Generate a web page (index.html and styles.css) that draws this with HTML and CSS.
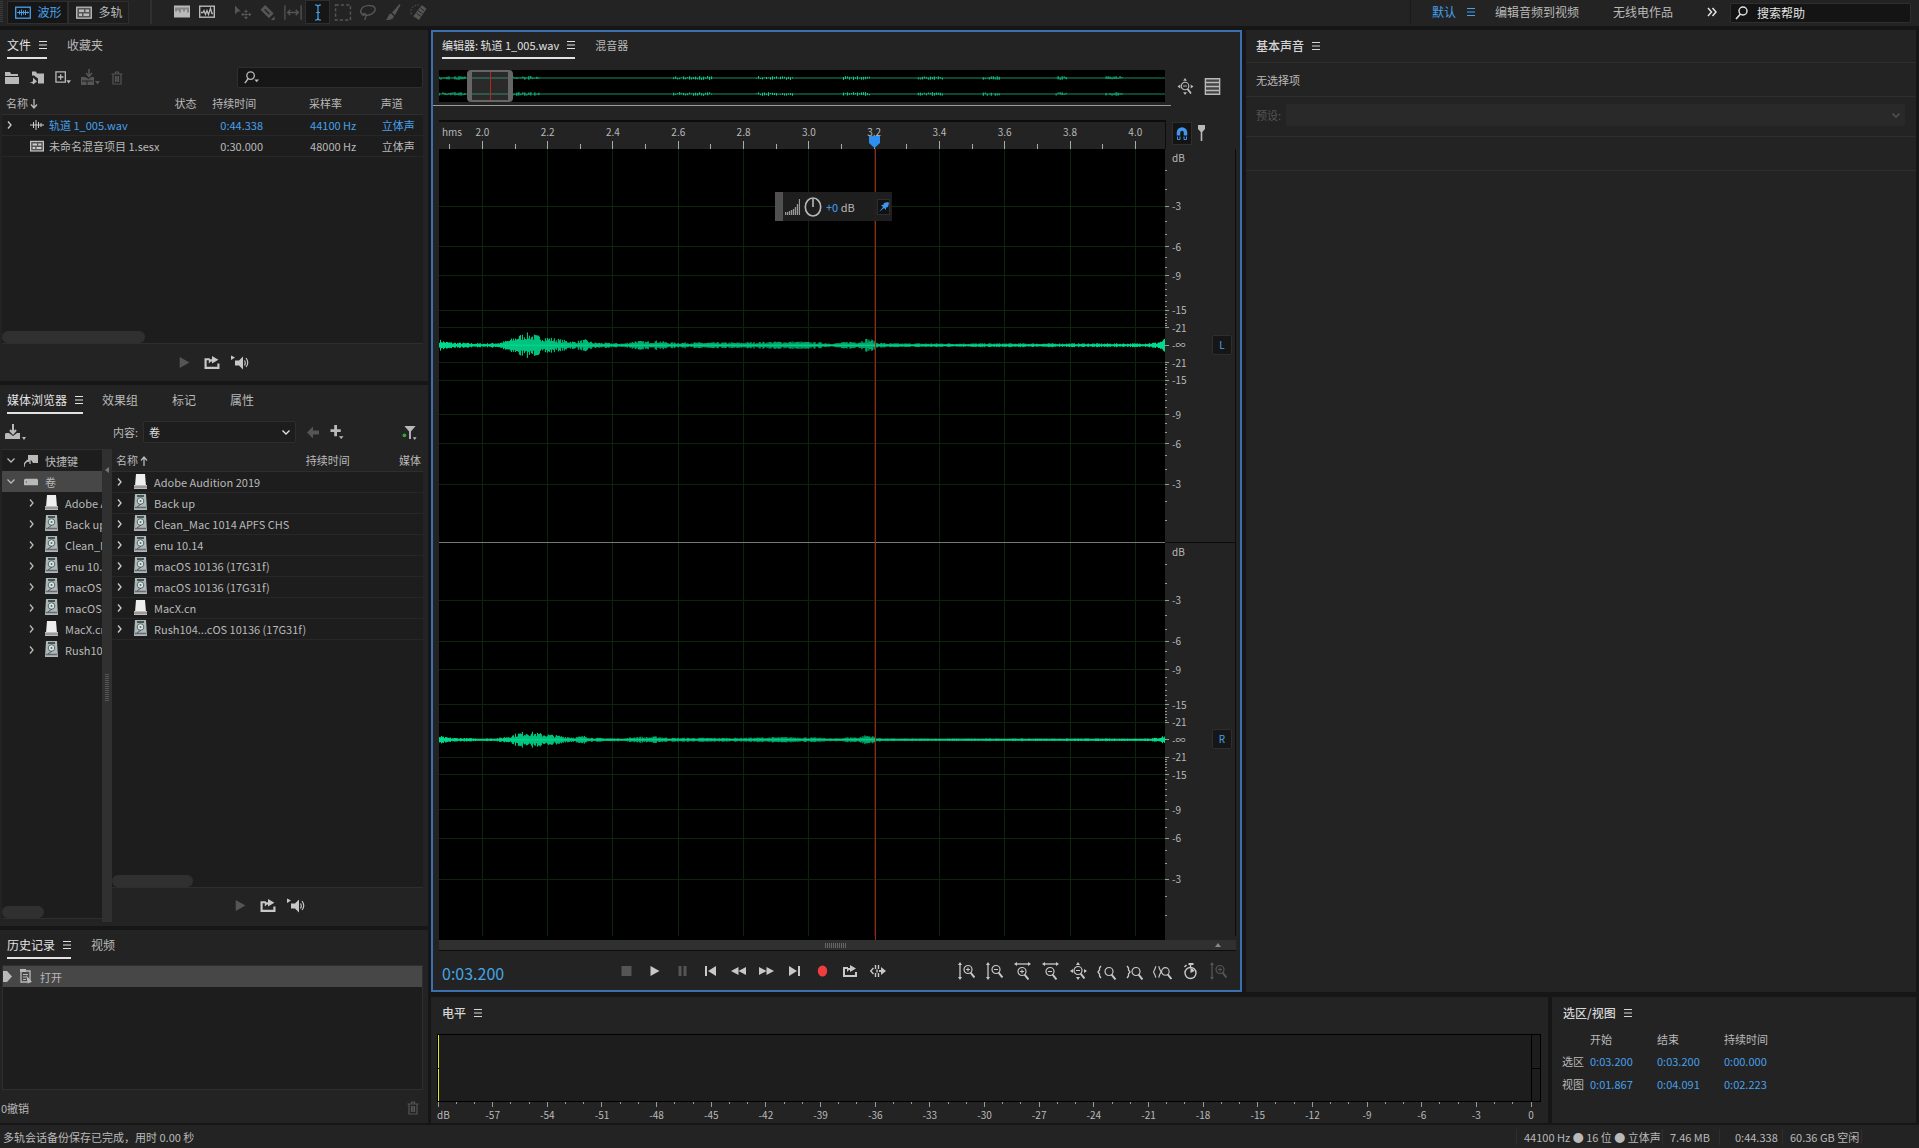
FILE: index.html
```html
<!DOCTYPE html>
<html>
<head>
    <meta charset="utf-8">
    <title>Audition</title>
    <meta name="viewport" content="width=device-width, initial-scale=1.0">
    <link rel="stylesheet" href="styles.css">
</head>
<body>
    <!-- Icon set -->
    <svg class="sprite">
        <symbol id="i-wavebox" viewBox="0 0 16 14"><rect x=".7" y="1.7" width="14.6" height="11" fill="none" stroke="currentColor" stroke-width="1.3"/><path d="M2 7h12M4.5 5v4M6.5 4v6M8.5 5v4M10.5 4.5v5M12.5 6v2" stroke="currentColor" fill="none"/></symbol>
        <symbol id="i-multi" viewBox="0 0 16 14"><rect x=".7" y="1.7" width="14.6" height="11" fill="#555" stroke="currentColor" stroke-width="1.3"/><path d="M3 4h5v2.500H3zM9.500 4H13v2.500H9.500zM3 8h3v2.500H3zM7.500 8H13v2.500H7.500z" fill="currentColor"/></symbol>
        <symbol id="i-spectral" viewBox="0 0 16 14"><path d="M0 1h16v12H0z" fill="currentColor"/><path d="M2 3v4M4 3v3M6 3v5M8 3v2M10 3v4M12 3v2M14 3v5" stroke="#555"/></symbol>
        <symbol id="i-graph" viewBox="0 0 16 14"><rect x=".7" y="1.700" width="14.600" height="11" fill="none" stroke="currentColor" stroke-width="1.400"/><path d="M2 8h2l1-2 1.500 4L8 6l1.500 4 2-6L13 9h1" fill="none" stroke="currentColor" stroke-width="1.300"/></symbol>
        <symbol id="i-move" viewBox="0 0 18 16"><path d="M1 1l6 6H4l-3 3zM12 5l2 2.500h-4zM12 15l2-2.500h-4zM7 10l2.500-2v4zM17.500 10L15 8v4z" fill="currentColor"/><path d="M12 7v6M9 10h6" stroke="currentColor"/></symbol>
        <symbol id="i-razor" viewBox="0 0 16 18"><path d="M5 1l9 9-5 5-9-9zM15 13v4h-4z" fill="currentColor"/><path d="M4.500 5.500l5 5" stroke="#232323" stroke-width="1.500"/></symbol>
        <symbol id="i-slip" viewBox="0 0 20 16"><path d="M1 0v16M19 0v16M4 8h12M7 5L4 8l3 3M13 5l3 3-3 3" stroke="currentColor" stroke-width="1.400" fill="none"/></symbol>
        <symbol id="i-ibeam" viewBox="0 0 10 18"><path d="M2 1q3 0 3 2v12q0 2-3 2M8 1Q5 1 5 3v12q0 2 3 2M3 9h4" stroke="currentColor" stroke-width="1.300" fill="none"/></symbol>
        <symbol id="i-marquee" viewBox="0 0 16 16"><rect x="1" y="1" width="14" height="14" fill="none" stroke="currentColor" stroke-width="1.400" stroke-dasharray="3 2"/></symbol>
        <symbol id="i-lasso" viewBox="0 0 16 16"><path d="M4 11C-1 8 1 2 8 1.500s9 4 4 7.500c-3 2-7 2-8 1s1-2 2 0-1 3-1 5" stroke="currentColor" stroke-width="1.300" fill="none"/></symbol>
        <symbol id="i-brush" viewBox="0 0 16 18"><path d="M15 0l1 1-6 11-3-3zM6 10l3 3c-1 4-5 4-9 4 3-1 2-6 6-7z" fill="currentColor"/></symbol>
        <symbol id="i-heal" viewBox="0 0 18 18"><path d="M13 1l5 4-8 12-6-4z" fill="currentColor"/><path d="M9 7l5 3.500M7.500 10l4.500 3M11.500 4l4 3.500" stroke="#232323" stroke-width="1"/><path d="M2 11C0 5 4 1 10 1" stroke="currentColor" stroke-dasharray="2 1.500" fill="none"/></symbol>
        <symbol id="i-menu" viewBox="0 0 8 10"><path d="M0 1.500h8M0 5h8M0 8.500h8" stroke="currentColor" stroke-width="1.200"/></symbol>
        <symbol id="i-search" viewBox="0 0 14 14"><circle cx="8" cy="5" r="4" fill="none" stroke="currentColor" stroke-width="1.400"/><path d="M5.500 8L1 13" stroke="currentColor" stroke-width="1.600"/></symbol>
        <symbol id="i-filter" viewBox="0 0 17 14"><circle cx="7" cy="5" r="4" fill="none" stroke="currentColor" stroke-width="1.400"/><path d="M4.500 8L1 13" stroke="currentColor" stroke-width="1.600"/><path d="M11 9h5l-2.500 3z" fill="currentColor"/></symbol>
        <symbol id="i-more" viewBox="0 0 10 10"><path d="M1 1l3.500 4L1 9M5.500 1L9 5 5.500 9" stroke="currentColor" stroke-width="1.500" fill="none"/></symbol>
        <symbol id="i-folder" viewBox="0 0 14 14"><path d="M0 1h5l1 2h7v2H0z" fill="currentColor"/><path d="M0 6h14v7H0z" fill="currentColor"/></symbol>
        <symbol id="i-import" viewBox="0 0 16 14"><path d="M3 1h4l1 2h7v10H9V8L5 5H3z" fill="currentColor"/><path d="M0 12q4 0 4-2V7l4 4-4 3v-1z" fill="currentColor"/></symbol>
        <symbol id="i-new" viewBox="0 0 17 14"><path d="M1 1h10v11H1z" fill="none" stroke="currentColor" stroke-width="1.400"/><path d="M6 3.500v6M3 6.500h6" stroke="currentColor" stroke-width="1.400"/><path d="M12 10h5l-2.500 3.500z" fill="currentColor"/></symbol>
        <symbol id="i-insert" viewBox="0 0 19 17"><path d="M8 0v6M5 4l3 3.500L11 4" stroke="currentColor" stroke-width="1.500" fill="none"/><path d="M0 8h4l4 2 2-2h3v8H0z" fill="currentColor"/><path d="M1 12h11M6 12v4" stroke="#232323"/><path d="M14 12h5l-2.500 3.500z" fill="currentColor"/></symbol>
        <symbol id="i-trash" viewBox="0 0 11 14"><path d="M0 3h11M4 2.500V1h3v1.500M1.500 3v10h8V3M4 5v6M5.500 5v6M7 5v6" stroke="currentColor" stroke-width="1.200" fill="none"/></symbol>
        <symbol id="i-chev" viewBox="0 0 5 8"><path d="M1 .5L4 4 1 7.500" stroke="currentColor" stroke-width="1.300" fill="none"/></symbol>
        <symbol id="i-down" viewBox="0 0 8 5"><path d="M.5 .5L4 4 7.500 .5" stroke="currentColor" stroke-width="1.300" fill="none"/></symbol>
        <symbol id="i-sortdown" viewBox="0 0 8 10"><path d="M4 0v9M1 5.500L4 9l3-3.500" stroke="currentColor" stroke-width="1.300" fill="none"/></symbol>
        <symbol id="i-sortup" viewBox="0 0 8 10"><path d="M4 10V1M1 4.500L4 1l3 3.500" stroke="currentColor" stroke-width="1.300" fill="none"/></symbol>
        <symbol id="i-wav" viewBox="0 0 14 12"><path d="M0 6h14M3.500 3v6M6 1v10M8.500 3v6M11 4v4" stroke="currentColor" stroke-width="1"/></symbol>
        <symbol id="i-play" viewBox="0 0 10 12"><path d="M1 1l9 5-9 5z" fill="currentColor"/></symbol>
        <symbol id="i-loop" viewBox="0 0 14 14"><path d="M5 4H1v8h12V8" fill="none" stroke="currentColor" stroke-width="2"/><path d="M4 8V4h3V1l6 3.500L7 8V6H6z" fill="currentColor"/></symbol>
        <symbol id="i-speaker" viewBox="0 0 20 14"><path d="M1 0l4 2-4 2.500zM5 5h4l4-4v13l-4-4H5z" fill="currentColor"/><path d="M14.500 5q1.500 2.500 0 5M16 2.500q3.500 4.500 0 9" stroke="currentColor" stroke-width="1.200" fill="none"/></symbol>
        <symbol id="i-drive-in" viewBox="0 0 21 17"><path d="M8 0v8M5 6l3 3.500L11 6" stroke="currentColor" stroke-width="2" fill="none"/><path d="M1 9h3l4 3 4-3h3v6H0v-5zM17 13h4l-2 3z" fill="currentColor"/></symbol>
        <symbol id="i-back" viewBox="0 0 12 12"><path d="M0 6l6-6v4h6v4H6v4z" fill="currentColor"/></symbol>
        <symbol id="i-plus" viewBox="0 0 14 15"><path d="M5.500 0v12M0 6h11" stroke="currentColor" stroke-width="3"/><path d="M9 12h5l-2.500 3z" fill="currentColor"/></symbol>
        <symbol id="i-funnel" viewBox="0 0 16 16"><path d="M2 1h12l-5 6v8H7V7zM11 13h4l-2 3z" fill="currentColor"/><circle cx="2" cy="11" r="2" fill="#2fa834"/></symbol>
        <symbol id="i-shortcut" viewBox="0 0 14 14"><path d="M4 1h10v8H9L7 6H4z" fill="currentColor"/><path d="M0 13q0-6 5-6M2.500 6.500H6V10" stroke="currentColor" stroke-width="1.300" fill="none"/></symbol>
        <symbol id="i-volume" viewBox="0 0 15 9"><path d="M1 1h13l1 1v6H0V2z" fill="currentColor"/><path d="M2 4.500h1" stroke="#333"/></symbol>
        <symbol id="i-ext" viewBox="0 0 13 17"><path d="M2 1h9l1 12H1z" fill="#eee"/><path d="M0 12h13v4H0z" fill="#bdbdbd"/><path d="M0 14h13" stroke="#777"/></symbol>
        <symbol id="i-disk" viewBox="0 0 13 17"><path d="M1 0h11l1 16H0z" fill="#adb8b8"/><path d="M3 2h7" stroke="#455" stroke-width="2"/><circle cx="6.500" cy="7" r="3.300" fill="#dce6e4" stroke="#566"/><circle cx="6.500" cy="7" r="1" fill="#566"/><path d="M3 13l4-3" stroke="#455"/><path d="M1 13.500h11" stroke="#667" stroke-width="1.500"/></symbol>
        <symbol id="i-history" viewBox="0 0 12 15"><path d="M1 2h9v11H1z" fill="none" stroke="currentColor" stroke-width="1.300"/><path d="M0 0h6v3H0zM6 6l6 7H9l-1 2z" fill="currentColor"/><path d="M3 5.500h5M3 8h3M3 10.500h3" stroke="currentColor"/></symbol>
        <symbol id="i-state" viewBox="0 0 9 11"><path d="M0 0h4l5 5.500L4 11H0z" fill="currentColor"/></symbol>
        <symbol id="i-list" viewBox="0 0 14 15"><path d="M.7 .7h12.600v13.600H.7zM1 4h12M1 7.500h12M1 11h12" stroke="currentColor" stroke-width="1.200" fill="#444"/></symbol>
        <symbol id="i-magnet" viewBox="0 0 12 14"><path d="M2.500 9V6a3.500 3.500 0 0 1 7 0v3" stroke="currentColor" stroke-width="3.500" fill="none"/><path d="M1.500 10v3h2.500v-3M8 10v3h2.500v-3" stroke="currentColor" fill="none"/></symbol>
        <symbol id="i-marker" viewBox="0 0 7 16"><path d="M0 0h7v4L4.300 7v9H2.700V7L0 4z" fill="currentColor"/></symbol>
        <symbol id="i-stop" viewBox="0 0 10 12"><path d="M0 1h10v10H0z" fill="currentColor"/></symbol>
        <symbol id="i-pause" viewBox="0 0 10 12"><path d="M1 1h3v10H1zM6 1h3v10H6z" fill="currentColor"/></symbol>
        <symbol id="i-prev" viewBox="0 0 11 12"><path d="M0 1h2v10H0zM11 1v10L3 6z" fill="currentColor"/></symbol>
        <symbol id="i-next" viewBox="0 0 11 12"><path d="M9 1h2v10H9zM0 1v10l8-5z" fill="currentColor"/></symbol>
        <symbol id="i-rew" viewBox="0 0 15 12"><path d="M7.500 2v8L0 6zM15 2v8L7.500 6z" fill="currentColor"/></symbol>
        <symbol id="i-ff" viewBox="0 0 15 12"><path d="M0 2v8l7.500-4zM7.500 2v8L15 6z" fill="currentColor"/></symbol>
        <symbol id="i-rec" viewBox="0 0 10 12"><ellipse cx="5" cy="6" rx="4.700" ry="5.500" fill="#f03e3e"/></symbol>
        <symbol id="i-skip" viewBox="0 0 16 14"><path d="M3.500 4L.700 7l2.800 3M5.500 1v4M5.500 9v4M8.500 1v4M8.500 9v4M7 5.500v3" stroke="currentColor" stroke-width="1.400" fill="none"/><path d="M9 6h2V3l5 4-5 4V8H9z" fill="currentColor"/></symbol>
        <!-- magnifiers -->
        <symbol id="i-lens" viewBox="0 0 12 14"><circle cx="5" cy="5.500" r="4" fill="none" stroke="currentColor" stroke-width="1.200"/><path d="M7.500 8.500l4 5" stroke="currentColor" stroke-width="2"/></symbol>
        <symbol id="i-vin" viewBox="0 0 17 18"><path d="M2 2v14" stroke="currentColor" stroke-width="1.300"/><path d="M2 0l2 3H0zM2 18l2-3H0z" fill="currentColor"/><use href="#i-lens" x="5" y="2" width="12" height="14"/><path d="M8 7.500h4M10 5.500v4" stroke="currentColor"/></symbol>
        <symbol id="i-vout" viewBox="0 0 17 18"><path d="M2 2v14" stroke="currentColor" stroke-width="1.300"/><path d="M2 0l2 3H0zM2 18l2-3H0z" fill="currentColor"/><use href="#i-lens" x="5" y="2" width="12" height="14"/><path d="M8 7.500h4" stroke="currentColor"/></symbol>
        <symbol id="i-hin" viewBox="0 0 17 18"><path d="M2 2h13" stroke="currentColor" stroke-width="1.300"/><path d="M0 2l3-2v4zM17 2l-3-2v4z" fill="currentColor"/><use href="#i-lens" x="3" y="4" width="12" height="14"/><path d="M6 9.500h4M8 7.500v4" stroke="currentColor"/></symbol>
        <symbol id="i-hout" viewBox="0 0 17 18"><path d="M2 2h13" stroke="currentColor" stroke-width="1.300"/><path d="M0 2l3-2v4zM17 2l-3-2v4z" fill="currentColor"/><use href="#i-lens" x="3" y="4" width="12" height="14"/><path d="M6 9.500h4" stroke="currentColor"/></symbol>
        <symbol id="i-full" viewBox="0 0 17 18"><path d="M8 0l2 3H6zM8 18l2-3H6zM0 9l3-2v4zM17 9l-3-2v4z" fill="currentColor"/><use href="#i-lens" x="3" y="3" width="12" height="14"/><path d="M6 8.500h4" stroke="currentColor"/></symbol>
        <symbol id="i-selin" viewBox="0 0 19 18"><path d="M4 4L2.500 6v2L1 10l1.500 2v2L4 16" stroke="currentColor" stroke-width="1.300" fill="none"/><use href="#i-lens" x="7" y="4" width="12" height="14"/></symbol>
        <symbol id="i-selout" viewBox="0 0 19 18"><path d="M2 4l1.500 2v2L5 10l-1.500 2v2L2 16" stroke="currentColor" stroke-width="1.300" fill="none"/><use href="#i-lens" x="6" y="4" width="12" height="14"/></symbol>
        <symbol id="i-selzoom" viewBox="0 0 20 18"><path d="M3 4L2 7l-1.500 3L2 13l1 3M6 4l1 3 1.500 3L7 13l-1 3" stroke="currentColor" stroke-width="1.200" fill="none"/><use href="#i-lens" x="8" y="4" width="12" height="14"/></symbol>
        <symbol id="i-timer" viewBox="0 0 14 18"><circle cx="7" cy="11" r="5.500" fill="none" stroke="currentColor" stroke-width="1.400"/><path d="M7 11V6a5 5 0 0 1 4 3zM5 1h5v2H5z" fill="currentColor"/><path d="M7 2v4M1 5l2-2" stroke="currentColor" stroke-width="1.400"/></symbol>
        <symbol id="i-pin" viewBox="0 0 10 10"><path d="M5 1l4-1 1 1-1 4-2 .500L7 8 2 3l2.500-.2zM4 5L0 10l5-4z" fill="currentColor"/></symbol>
        <symbol id="i-gain" viewBox="0 0 15 16"><path d="M.5 16v-3M2.500 16v-3M4.500 16v-4M6.500 16v-5M8.500 16v-6M10.500 16V8M12.500 16V5M14.500 16V0" stroke="currentColor" stroke-width="1.300"/></symbol>
        <symbol id="i-knob" viewBox="0 0 18 20"><ellipse cx="9" cy="10" rx="7.700" ry="9" fill="none" stroke="currentColor" stroke-width="1.600"/><path d="M9 2v8" stroke="currentColor" stroke-width="1.600"/></symbol>
    </svg>

    <!-- Top Bar -->
    <header class="topbar">
        <span class="grip"></span>
        <button class="mode active"><svg class="w16"><use href="#i-wavebox"/></svg>波形</button>
        <button class="mode"><svg class="w16"><use href="#i-multi"/></svg>多轨</button>
        <div class="views">
            <button><svg class="w16"><use href="#i-spectral"/></svg></button>
            <button><svg class="w16"><use href="#i-graph"/></svg></button>
        </div>
        <div class="tools">
            <button><svg><use href="#i-move"/></svg></button>
            <button><svg><use href="#i-razor"/></svg></button>
            <button><svg><use href="#i-slip"/></svg></button>
            <button class="active"><svg><use href="#i-ibeam"/></svg></button>
            <button><svg><use href="#i-marquee"/></svg></button>
            <button><svg><use href="#i-lasso"/></svg></button>
            <button><svg><use href="#i-brush"/></svg></button>
            <button><svg><use href="#i-heal"/></svg></button>
        </div>
        <nav class="workspaces">
            <a href="#" class="active">默认 <svg class="menu"><use href="#i-menu"/></svg></a>
            <a href="#">编辑音频到视频</a>
            <a href="#">无线电作品</a>
            <button><svg class="w10"><use href="#i-more"/></svg></button>
        </nav>
        <label class="help"><svg class="w14"><use href="#i-search"/></svg><input type="text" value="搜索帮助" aria-label="搜索帮助"></label>
    </header>

    <main>
        <div class="left">
            <!-- Files -->
            <section class="panel files">
                <div class="tabs">
                    <button class="tab active">文件 <svg class="menu"><use href="#i-menu"/></svg></button>
                    <button class="tab">收藏夹</button>
                </div>
                <div class="toolbar">
                    <button><svg class="w14"><use href="#i-folder"/></svg></button>
                    <button><svg class="w16"><use href="#i-import"/></svg></button>
                    <button><svg class="w16"><use href="#i-new"/></svg></button>
                    <button disabled><svg class="w18"><use href="#i-insert"/></svg></button>
                    <button disabled><svg class="w14"><use href="#i-trash"/></svg></button>
                    <label class="filter"><svg class="w16"><use href="#i-filter"/></svg><input type="text" aria-label="过滤"></label>
                </div>
                <div class="list">
                    <table class="file-table">
                        <thead>
                            <tr><th>名称<svg class="sort"><use href="#i-sortdown"/></svg></th><th>状态</th><th>持续时间</th><th>采样率</th><th>声道</th></tr>
                        </thead>
                        <tbody>
                            <tr class="open"><td><div class="name"><svg class="chev"><use href="#i-chev"/></svg><svg class="w14"><use href="#i-wav"/></svg>轨道 1_005.wav</div></td><td></td><td>0:44.338</td><td>44100 Hz</td><td>立体声</td></tr>
                            <tr><td><div class="name"><span class="chev"></span><svg class="w14"><use href="#i-multi"/></svg>未命名混音项目 1.sesx</div></td><td></td><td>0:30.000</td><td>48000 Hz</td><td>立体声</td></tr>
                        </tbody>
                    </table>
                    <div class="thumb long"></div>
                </div>
                <div class="preview">
                    <button disabled><svg><use href="#i-play"/></svg></button>
                    <button><svg><use href="#i-loop"/></svg></button>
                    <button><svg><use href="#i-speaker"/></svg></button>
                </div>
            </section>

            <!-- Media Browser -->
            <section class="panel media">
                <div class="tabs">
                    <button class="tab active">媒体浏览器 <svg class="menu"><use href="#i-menu"/></svg></button>
                    <button class="tab">效果组</button>
                    <button class="tab">标记</button>
                    <button class="tab">属性</button>
                </div>
                <div class="toolbar">
                    <button class="drives"><svg class="w21"><use href="#i-drive-in"/></svg></button>
                    <label for="content">内容:</label>
                    <div class="select"><select id="content"><option>卷</option></select><svg class="down"><use href="#i-down"/></svg></div>
                    <button disabled><svg class="w12"><use href="#i-back"/></svg></button>
                    <button><svg class="w14"><use href="#i-plus"/></svg></button>
                    <button class="funnel"><svg class="w16"><use href="#i-funnel"/></svg></button>
                </div>
                <div class="browser">
                    <div class="tree">
                        <ul id="tree">
                            <li class="root"><svg class="down"><use href="#i-down"/></svg><svg class="w14"><use href="#i-shortcut"/></svg>快捷键</li>
                            <li class="root selected"><svg class="down"><use href="#i-down"/></svg><svg class="w14"><use href="#i-volume"/></svg>卷</li>
                        </ul>
                        <div class="thumb short"></div>
                    </div>
                    <div class="sash"><i></i><span></span></div>
                    <div class="contents">
                        <div class="list">
                            <table class="media-table">
                                <thead>
                                    <tr><th>名称<svg class="sort"><use href="#i-sortup"/></svg></th><th>持续时间</th><th>媒体</th></tr>
                                </thead>
                                <tbody id="volumes"></tbody>
                            </table>
                            <div class="thumb mid"></div>
                        </div>
                        <div class="preview">
                            <button disabled><svg><use href="#i-play"/></svg></button>
                            <button><svg><use href="#i-loop"/></svg></button>
                            <button><svg><use href="#i-speaker"/></svg></button>
                        </div>
                    </div>
                </div>
            </section>

            <!-- History -->
            <section class="panel history">
                <div class="tabs">
                    <button class="tab active">历史记录 <svg class="menu"><use href="#i-menu"/></svg></button>
                    <button class="tab">视频</button>
                </div>
                <div class="states">
                    <div class="state"><svg class="w9"><use href="#i-state"/></svg><svg class="w12"><use href="#i-history"/></svg>打开</div>
                </div>
                <div class="undo">0撤销 <button disabled><svg class="w14"><use href="#i-trash"/></svg></button></div>
            </section>
        </div>

        <div class="right">
            <div class="upper">
                <!-- Editor -->
                <section class="panel editor">
                    <div class="tabs">
                        <button class="tab active">编辑器: 轨道 1_005.wav <svg class="menu"><use href="#i-menu"/></svg></button>
                        <button class="tab">混音器</button>
                    </div>
                    <div class="overview-row">
                        <div class="overview">
                            <svg id="overview"></svg>
                            <div class="window" id="window"></div>
                        </div>
                        <div class="overview-tools">
                            <button><svg><use href="#i-full"/></svg></button>
                            <button><svg><use href="#i-list"/></svg></button>
                        </div>
                    </div>
                    <div class="timeline-row">
                        <div class="timeline">
                            <svg id="timeline"></svg>
                            <svg class="cti"><path d="M0 0h11v7l-5.500 5L0 7z" fill="#2f8ff0"/></svg>
                        </div>
                        <div class="snap">
                            <button class="active"><svg class="w12"><use href="#i-magnet"/></svg></button>
                            <button><svg class="w7"><use href="#i-marker"/></svg></button>
                        </div>
                    </div>
                    <div class="waves">
                        <div class="channel">
                            <svg class="wave" data-gain="1"></svg>
                            <div class="scale"><svg></svg><button>L</button></div>
                        </div>
                        <div class="channel">
                            <svg class="wave" data-gain="0.7"></svg>
                            <div class="scale"><svg></svg><button>R</button></div>
                        </div>
                        <div class="overlay">
                            <div class="playhead"></div>
                            <div class="hud">
                                <span class="hud-grip"></span>
                                <svg class="gain"><use href="#i-gain"/></svg>
                                <svg class="knob"><use href="#i-knob"/></svg>
                                <span class="value"><b>+0</b> dB</span>
                                <button><svg class="w10"><use href="#i-pin"/></svg></button>
                            </div>
                        </div>
                    </div>
                    <div class="hscroll"><span></span><i></i></div>
                    <div class="transport">
                        <span class="time">0:03.200</span>
                        <div class="buttons">
                            <button disabled><svg><use href="#i-stop"/></svg></button>
                            <button><svg><use href="#i-play"/></svg></button>
                            <button disabled><svg><use href="#i-pause"/></svg></button>
                            <button><svg><use href="#i-prev"/></svg></button>
                            <button><svg><use href="#i-rew"/></svg></button>
                            <button><svg><use href="#i-ff"/></svg></button>
                            <button><svg><use href="#i-next"/></svg></button>
                            <button><svg><use href="#i-rec"/></svg></button>
                            <button><svg class="big"><use href="#i-loop"/></svg></button>
                            <button><svg class="big"><use href="#i-skip"/></svg></button>
                        </div>
                        <div class="buttons zoom">
                            <button><svg><use href="#i-vin"/></svg></button>
                            <button><svg><use href="#i-vout"/></svg></button>
                            <button><svg><use href="#i-hin"/></svg></button>
                            <button><svg><use href="#i-hout"/></svg></button>
                            <button><svg><use href="#i-full"/></svg></button>
                            <button><svg><use href="#i-selin"/></svg></button>
                            <button><svg><use href="#i-selout"/></svg></button>
                            <button><svg><use href="#i-selzoom"/></svg></button>
                            <button><svg><use href="#i-timer"/></svg></button>
                            <button disabled><svg><use href="#i-vin"/></svg></button>
                        </div>
                    </div>
                </section>

                <!-- Essential Sound -->
                <section class="panel sound">
                    <h2>基本声音 <svg class="menu"><use href="#i-menu"/></svg></h2>
                    <p>无选择项</p>
                    <div class="preset">
                        <label for="preset">预设:</label>
                        <div class="select"><select id="preset" disabled><option></option></select><svg class="down"><use href="#i-down"/></svg></div>
                    </div>
                    <div class="empty"></div>
                </section>
            </div>

            <div class="lower">
                <!-- Levels -->
                <section class="panel levels">
                    <h2>电平 <svg class="menu"><use href="#i-menu"/></svg></h2>
                    <div class="meter">
                        <div class="bars"><div></div><div></div></div>
                        <div class="clips"><div></div><div></div></div>
                    </div>
                    <svg id="levels"></svg>
                </section>

                <!-- Selection / View -->
                <section class="panel selection">
                    <h2>选区/视图 <svg class="menu"><use href="#i-menu"/></svg></h2>
                    <table>
                        <tr><th></th><th>开始</th><th>结束</th><th>持续时间</th></tr>
                        <tr><th>选区</th><td>0:03.200</td><td>0:03.200</td><td>0:00.000</td></tr>
                        <tr><th>视图</th><td>0:01.867</td><td>0:04.091</td><td>0:02.223</td></tr>
                    </table>
                </section>
            </div>
        </div>
    </main>

    <footer class="status">
        <span class="message">多轨会话备份保存已完成，用时 0.00 秒</span>
        <span class="format">44100 Hz ● 16 位 ● 立体声</span>
        <span class="size">7.46 MB</span>
        <span class="length">0:44.338</span>
        <span class="free">60.36 GB 空闲</span>
    </footer>

    <script src="script.js"></script>
</body>
</html>
```
FILE: styles.css
```css
:root {
    --panel: #232323;
    --well: #1d1d1d;
    --gap: #161616;
    --line: #2e2e2e;
    --text: #b9b9b9;
    --bright: #e2e2e2;
    --dim: #555;
    --blue: #46a0ea;
}

* {
    box-sizing: border-box;
}

body {
    margin: 0;
    height: 100vh;
    display: flex;
    flex-direction: column;
    overflow: hidden;
    background: var(--gap);
    color: var(--text);
    font-family: "Noto Sans CJK SC", "Noto Sans", sans-serif;
    font-size: 11px;
    line-height: 16px;
}

button, input, select {
    font: inherit;
    color: inherit;
    background: none;
    border: none;
    padding: 0;
    margin: 0;
}

button {
    display: flex;
    align-items: center;
    justify-content: center;
    white-space: nowrap;
}

button:disabled {
    color: var(--dim);
}

input, select {
    min-width: 0;
    flex: 1;
    outline: none;
    appearance: none;
}

a {
    color: inherit;
    text-decoration: none;
}

svg {
    flex: none;
    display: block;
}

.sprite {
    width: 0;
    height: 0;
    position: absolute;
}

.w7 { width: 7px; height: 16px; }
.w9 { width: 9px; height: 11px; }
.w10 { width: 10px; height: 10px; }
.w12 { width: 12px; height: 15px; }
.w14 { width: 14px; height: 14px; }
.w16 { width: 16px; height: 15px; }
.w18 { width: 19px; height: 17px; }
.w21 { width: 21px; height: 17px; }
.menu { width: 8px; height: 10px; }
.down { width: 8px; height: 5px; }
.chev { width: 5px; height: 8px; }

/* Top bar */
.topbar {
    flex: none;
    height: 26px;
    display: flex;
    align-items: center;
    padding-bottom: 2px;
    background: var(--panel);
    font-size: 12px;
}

.grip {
    width: 3px;
    height: 22px;
    margin-right: 4px;
    background: repeating-linear-gradient(#3c3c3c 0 1px, var(--panel) 1px 2px);
}

.mode {
    width: 61px;
    height: 23px;
    gap: 6px;
    padding-left: 2px;
    background: #1e1e1e;
    border: 1px solid var(--line);
}

.mode.active {
    background: #161616;
    color: var(--blue);
}

.views {
    display: flex;
    gap: 9px;
    height: 24px;
    margin-left: 21px;
    padding: 0 10px 2px 22px;
    border-left: 2px solid #303030;
}

.tools {
    display: flex;
    align-items: center;
    margin-left: 5px;
    color: var(--dim);
}

.tools button {
    width: 25px;
    height: 24px;
}

.tools svg {
    width: 18px;
    height: 17px;
}

.tools .active {
    color: var(--blue);
    background: #161616;
    border: 1px solid var(--line);
}

.workspaces {
    display: flex;
    align-items: center;
    height: 24px;
    margin-left: auto;
    padding: 0 8px 0 21px;
    border-left: 1px solid #1a1a1a;
}

.workspaces a {
    display: flex;
    align-items: center;
    gap: 11px;
    margin-right: 34px;
}

.workspaces .active {
    color: var(--blue);
    margin-right: 20px;
}

.workspaces button {
    color: var(--bright);
}

.help {
    display: flex;
    align-items: center;
    gap: 8px;
    width: 181px;
    height: 20px;
    margin: 2px 8px 0 5px;
    padding-left: 4px;
    background: #141414;
    border: 1px solid var(--line);
    border-radius: 2px;
    color: var(--bright);
}

/* Layout */
main {
    flex: 1;
    min-height: 0;
    display: flex;
    gap: 3px;
    padding: 4px 3px 2px 0;
}

.left {
    flex: 428 1 0;
    min-width: 0;
    display: flex;
    flex-direction: column;
    gap: 4px;
}

.right {
    flex: 1485 1 0;
    min-width: 0;
    display: flex;
    flex-direction: column;
    gap: 5px;
}

.upper, .lower {
    display: flex;
    gap: 4px;
}

.upper {
    flex: 1;
    min-height: 0;
}

.lower {
    flex: none;
    height: 126px;
}

.panel {
    min-width: 0;
    min-height: 0;
    display: flex;
    flex-direction: column;
    background: var(--panel);
    overflow: hidden;
}

.files { flex: 351 1 0; }
.media { flex: 541 1 0; }
.history { flex: 193 1 0; }
.editor { flex: 807 1 0; }
.sound { flex: 670 1 0; }
.levels { flex: 1117 1 0; }
.selection { flex: 364 1 0; }

/* Tabs */
.tabs {
    flex: none;
    display: flex;
    gap: 20px;
    height: 29px;
    padding-left: 7px;
    font-size: 12px;
}

.tab {
    gap: 8px;
    padding-top: 3px;
    border-bottom: 2px solid transparent;
}

.tab.active {
    color: var(--bright);
    border-color: var(--bright);
}

.media .tabs {
    gap: 34px;
}

.media .tab.active {
    margin-right: -15px;
}

h2 {
    flex: none;
    display: flex;
    align-items: center;
    gap: 8px;
    margin: 0;
    height: 31px;
    padding-left: 11px;
    font-size: 12px;
    font-weight: 500;
    color: #d6d6d6;
}

/* Toolbars */
.toolbar {
    flex: none;
    display: flex;
    align-items: center;
    height: 21px;
    margin: 8px 5px 4px;
}

.files .toolbar {
    gap: 10px;
}

.filter {
    display: flex;
    align-items: center;
    width: 186px;
    height: 21px;
    margin-left: auto;
    padding-left: 6px;
    background: #161616;
    border: 1px solid var(--line);
    border-radius: 2px;
}

.media .toolbar {
    height: 22px;
    margin-top: 7px;
    margin-bottom: 6px;
    gap: 11px;
}

.media .toolbar label {
    margin-left: 76px;
    margin-right: -6px;
}

.select {
    display: flex;
    align-items: center;
    height: 22px;
    padding: 0 5px;
    background: var(--well);
    border: 1px solid var(--line);
    border-radius: 2px;
    color: var(--bright);
}

.media .select {
    width: 153px;
}

.funnel {
    margin-left: auto;
    margin-right: 5px;
}

/* Lists */
.list {
    flex: 1;
    min-height: 0;
    display: flex;
    flex-direction: column;
    justify-content: space-between;
    margin: 0 5px 0 2px;
    background: var(--well);
    border-bottom: 1px solid var(--line);
}

.list table {
    width: 100%;
    table-layout: fixed;
    border-collapse: collapse;
}

.list th {
    height: 22px;
    padding: 0 0 0 4px;
    background: var(--panel);
    border-bottom: 1px solid var(--line);
    font-weight: 400;
    text-align: left;
    white-space: nowrap;
}

.list td {
    height: 21px;
    padding: 0;
    border-bottom: 1px solid #272727;
    white-space: nowrap;
}

.sort {
    display: inline-block;
    vertical-align: -1px;
    width: 8px;
    height: 10px;
    margin-left: 2px;
}

.file-table th:nth-child(1) { width: 40%; }
.file-table th:nth-child(2) { width: 9%; }
.file-table th:nth-child(3) { width: 23%; }
.file-table th:nth-child(4) { width: 17%; }
.file-table th:nth-child(5) { width: 11%; }
.file-table td:nth-child(3) { padding-left: 12px; }
.file-table td:nth-child(n+4) { padding-left: 5px; }

.name {
    display: flex;
    align-items: center;
    gap: 5px;
    padding-left: 5px;
    color: inherit;
}

.file-table .chev {
    margin-right: 13px;
}

.open {
    color: var(--blue);
}

.name svg {
    color: #ccc;
}

.thumb {
    flex: none;
    height: 12px;
    border-radius: 6px;
    background: #303030;
}

.long { width: 34%; }
.mid { width: 26%; }
.short { width: 42%; }

.preview {
    flex: none;
    display: flex;
    align-items: center;
    justify-content: center;
    height: 37px;
    padding-right: 5px;
    gap: 8px;
}

.preview button {
    width: 20px;
    color: #c8c8c8;
}

.preview button:disabled {
    color: var(--dim);
}

.preview svg {
    width: 20px;
    height: 15px;
}

.preview button:first-child svg {
    height: 13px;
}

/* Media browser */
.browser {
    flex: 1;
    min-height: 0;
    display: flex;
    padding-bottom: 4px;
}

.tree {
    flex: 0 0 100px;
    min-width: 0;
    display: flex;
    flex-direction: column;
    justify-content: space-between;
    margin: 0 0 3px 2px;
    background: var(--well);
    border: 1px solid var(--line);
    border-width: 1px 0;
    overflow: hidden;
}

.tree ul {
    margin: 0;
    padding: 0;
    list-style: none;
}

.tree li {
    display: flex;
    align-items: center;
    gap: 7px;
    height: 21px;
    padding-left: 27px;
    white-space: nowrap;
    overflow: hidden;
}

.tree li.root {
    height: 21px;
    padding-left: 5px;
}

.tree li.root .w14 {
    margin: 0 0 0 2px;
}

.tree li .chev {
    margin-right: 4px;
}

.tree .selected {
    background: #474747;
}

.drive {
    width: 13px;
    height: 17px;
}

.sash {
    flex: 0 0 10px;
    display: flex;
    flex-direction: column;
    align-items: center;
    justify-content: space-between;
    padding: 18px 0 220px;
    background: #303030;
}

.sash i {
    border: 3px solid transparent;
    border-left: 0;
    border-right: 4px solid #777;
}

.sash span {
    width: 4px;
    height: 28px;
    background: repeating-linear-gradient(#555 0 1px, #303030 1px 2px);
}

.contents {
    flex: 1;
    min-width: 0;
    display: flex;
    flex-direction: column;
}

.contents .list {
    margin-left: 0;
}

.media-table th:nth-child(1) { width: 61%; }
.media-table th:nth-child(2) { width: 30%; }
.media-table th:nth-child(3) { width: 9%; }

.media-table .name {
    gap: 7px;
}

.media-table .chev {
    margin-right: 5px;
}

.contents .preview {
    height: 34px;
}

/* History */
.states {
    flex: 1;
    margin: 6px 5px 0 2px;
    background: var(--well);
    border: 1px solid var(--line);
}

.state {
    display: flex;
    align-items: center;
    gap: 8px;
    height: 21px;
    background: #474747;
}

.undo {
    flex: none;
    display: flex;
    align-items: center;
    justify-content: space-between;
    height: 33px;
    padding: 2px 8px 0 1px;
}

/* Editor */
.editor {
    border: 2px solid #3a70b0;
}

.editor .tabs {
    height: 27px;
    padding-left: 9px;
    margin-bottom: 11px;
}

.editor .tab {
    padding-top: 1px;
    font-size: 11px;
}

.overview-row {
    flex: none;
    display: flex;
    height: 36px;
}

.overview {
    flex: 1;
    position: relative;
    padding: 0 6px;
    border-bottom: 1px solid #999;
}

.overview > svg {
    width: 100%;
    height: 32px;
    background: #000;
}

/* visible range of the file */
.window {
    position: absolute;
    top: 0;
    height: 32px;
    border: 2px solid #666;
    border-width: 2px 5px;
    border-radius: 4px;
    background: linear-gradient(90deg, transparent 50%, #b3261c 50% 53%, transparent 53%), rgba(120, 120, 120, 0.35);
}

.overview-tools {
    flex: 0 0 69px;
    display: flex;
    align-items: center;
    gap: 10px;
    padding: 0 0 4px 6px;
}

.overview-tools svg {
    width: 17px;
    height: 17px;
}

.timeline-row {
    flex: none;
    display: flex;
    height: 29px;
    margin-top: 14px;
}

.timeline {
    flex: 1;
    position: relative;
    margin-left: 6px;
    border-top: 2px solid #0c0c0c;
    border-right: 1px solid #0c0c0c;
}

.timeline > svg:first-child {
    width: 100%;
    height: 27px;
}

.timeline .cti {
    position: absolute;
    left: 60%;
    bottom: 1px;
    width: 11px;
    height: 12px;
    margin-left: -6px;
}

.snap {
    flex: 0 0 74px;
    display: flex;
    align-items: center;
    gap: 6px;
    padding: 0 0 3px 6px;
}

.snap .active {
    width: 20px;
    height: 23px;
    background: #141414;
    border: 1px solid var(--line);
    color: #3f96f0;
}

text {
    font-size: 10px;
    fill: var(--text);
}

.waves {
    flex: 1;
    min-height: 0;
    position: relative;
    display: flex;
    flex-direction: column;
    margin: 0 4px 0 6px;
    padding-bottom: 4px;
    background: linear-gradient(90deg, #000 calc(100% - 71px), transparent 0);
}

.channel {
    flex: 1;
    min-height: 0;
    display: flex;
}

.wave {
    flex: 1;
    min-width: 0;
    height: 100%;
}

.channel:first-child .wave {
    border-bottom: 1px solid #777;
}

.scale {
    flex: 0 0 71px;
    display: flex;
    align-items: center;
    justify-content: space-between;
    padding-right: 3px;
    border-right: 1px solid #0c0c0c;
}

.channel:first-child .scale {
    border-bottom: 1px solid #0c0c0c;
}

.scale svg {
    width: 40px;
    height: 100%;
}

.scale button {
    width: 20px;
    height: 20px;
    background: #161616;
    border: 1px solid var(--line);
    border-radius: 2px;
    color: var(--blue);
    font-size: 10px;
}

.overlay {
    position: absolute;
    inset: 0 71px 0 0;
}

.playhead {
    position: absolute;
    top: 0;
    bottom: 0;
    left: 60%;
    width: 1px;
    background: #b01c10;
}

.hud {
    position: absolute;
    left: 336px;
    top: 43px;
    display: flex;
    align-items: center;
    width: 117px;
    height: 29px;
    padding-right: 2px;
    background: rgba(32, 32, 32, 0.95);
}

.hud-grip {
    width: 8px;
    height: 29px;
    margin-right: 2px;
    background: #505050;
}

.gain {
    width: 15px;
    height: 16px;
    margin-right: 4px;
    color: #999;
}

.knob {
    width: 18px;
    height: 20px;
    margin-right: 4px;
}

.hud b {
    font-weight: 400;
    color: var(--blue);
}

.hud button {
    width: 13px;
    height: 16px;
    margin-left: auto;
    background: #111;
    border: 1px solid var(--line);
    color: #3f96f0;
}

.hscroll {
    flex: none;
    display: flex;
    align-items: center;
    justify-content: space-between;
    height: 11px;
    margin: 0 4px 0 6px;
    padding: 0 15px 0 386px;
    background: #303030;
    border-bottom: 1px solid #0c0c0c;
}

.hscroll span {
    width: 22px;
    height: 5px;
    background: repeating-linear-gradient(90deg, #666 0 1px, #303030 1px 2px);
}

.hscroll i {
    border: 3px solid transparent;
    border-top: 0;
    border-bottom: 4px solid #888;
}

.transport {
    flex: none;
    display: flex;
    align-items: center;
    height: 39px;
    padding: 0 8px 0 9px;
}

.time {
    flex: 0 0 170px;
    padding-top: 4px;
    font-size: 16px;
    color: #43a5e6;
}

.buttons {
    display: flex;
    color: #c8c8c8;
}

.buttons button {
    width: 28px;
    height: 24px;
}

.buttons svg {
    width: 15px;
    height: 12px;
}

.buttons .big {
    width: 16px;
    height: 14px;
}

.zoom {
    margin-left: auto;
}

.zoom svg {
    width: 19px;
    height: 18px;
}

/* Essential sound */
.sound h2 {
    border-bottom: 1px solid var(--line);
    height: 33px;
    padding-left: 10px;
}

.sound p {
    margin: 0;
    height: 34px;
    padding: 9px 10px;
    border-bottom: 1px solid var(--line);
}

.preset {
    display: flex;
    align-items: center;
    gap: 5px;
    height: 40px;
    padding: 0 11px 3px 10px;
    border-bottom: 1px solid var(--line);
    color: var(--dim);
}

.preset .select {
    flex: 1;
    background: #292929;
    border: none;
    color: var(--dim);
}

.empty {
    height: 34px;
    border-bottom: 1px solid var(--line);
}

/* Levels */
.meter {
    display: flex;
    height: 68px;
    margin: 6px 7px 0 6px;
    border: 1px solid #000;
    background: var(--well);
}

.bars {
    flex: 1;
    display: flex;
    flex-direction: column;
    gap: 1px;
}

.bars div {
    flex: 1;
    border-left: 1px solid #e8e337;
}

.clips {
    width: 9px;
    display: flex;
    flex-direction: column;
    border-left: 1px solid #000;
}

.clips div {
    flex: 1;
}

.clips div + div {
    border-top: 1px solid #000;
}

#levels {
    width: calc(100% - 24px);
    height: 21px;
    margin-left: 7px;
    overflow: visible;
}

/* Selection / view */
.selection table {
    align-self: flex-start;
    margin: 0 0 0 10px;
    border-spacing: 0;
}

.selection th, .selection td {
    height: 23px;
    padding: 0;
    text-align: left;
    font-weight: 400;
}

.selection tr:first-child th {
    width: 67px;
    height: 21px;
}

.selection tr:first-child th:first-child {
    width: 28px;
}

.selection td {
    color: var(--blue);
}

/* Status bar */
.status {
    flex: none;
    display: flex;
    align-items: center;
    height: 23px;
    padding-right: 57px;
    background: var(--panel);
}

.status span {
    height: 16px;
    padding-left: 7px;
    border-left: 1px solid var(--line);
    white-space: nowrap;
}

.status .message {
    flex: 1;
    padding-left: 3px;
    border: none;
}

.status .format { width: 146px; }
.status .size { width: 57px; }
.status .length { width: 63px; padding-left: 15px; }
.status .free { width: 80px; border-right: 1px solid var(--line); }
```
FILE: script.js
```js
const NS = 'http://www.w3.org/2000/svg';
const VIEW = { start: 1.867, end: 4.091, total: 44.338 };

// Volumes shown in the tree and in the list
const volumes = [
    ['Adobe Audition 2019', 'ext'],
    ['Back up', 'disk'],
    ['Clean_Mac 1014 APFS CHS', 'disk'],
    ['enu 10.14', 'disk'],
    ['macOS 10136 (17G31f)', 'disk'],
    ['macOS 10136 (17G31f)', 'disk'],
    ['MacX.cn', 'ext'],
    ['Rush104...cOS 10136 (17G31f)', 'disk']
];

volumes.forEach(([name, icon]) => {
    const inner = `<svg class="chev"><use href="#i-chev"/></svg><svg class="drive"><use href="#i-${icon}"/></svg>${name}`;
    document.getElementById('tree').insertAdjacentHTML('beforeend', `<li>${inner}</li>`);
    document.getElementById('volumes').insertAdjacentHTML('beforeend',
        `<tr><td colspan="3"><div class="name">${inner}</div></td></tr>`);
});

function add(svg, tag, attrs, text) {
    const el = document.createElementNS(NS, tag);
    for (const k in attrs) el.setAttribute(k, attrs[k]);
    if (text !== undefined) el.textContent = text;
    svg.appendChild(el);
    return el;
}

function line(svg, x1, y1, x2, y2, stroke) {
    add(svg, 'line', { x1, y1, x2, y2, stroke, 'shape-rendering': 'crispEdges' });
}

function timeX(t) {
    return (t - VIEW.start) / (VIEW.end - VIEW.start) * 100 + '%';
}

let seed = 7;
function rand() {
    seed = (seed * 16807) % 2147483647;
    return seed / 2147483647;
}

// Envelope points: position (0-727), half height
const envelope = [[0, 6], [6, 4], [14, 3], [45, 2], [60, 3], [70, 6], [78, 10], [87, 13], [100, 10],
    [112, 8], [122, 6], [135, 4], [146, 6], [154, 3], [185, 2], [197, 5], [206, 4], [218, 5], [230, 3],
    [300, 3], [340, 4], [360, 4], [382, 3], [395, 2], [410, 4], [420, 4], [427, 7], [433, 6], [438, 3],
    [450, 2], [700, 2], [718, 3], [725, 6], [727, 8]];

function amp(x) {
    const i = envelope.findIndex(p => p[0] >= x);
    if (i < 1) return envelope[0][1];
    const [x0, a0] = envelope[i - 1], [x1, a1] = envelope[i];
    return a0 + (a1 - a0) * (x - x0) / (x1 - x0);
}

const marks = [-3, -6, -9, -15, -21];
const level = db => Math.pow(10, db / 20) * 50;

document.querySelectorAll('.wave').forEach(svg => {
    for (let t = 2; t < 4.05; t += 0.2) line(svg, timeX(t), 0, timeX(t), '100%', '#0a250c');
    marks.forEach(db => [-1, 1].forEach(s => {
        const y = 50 + s * level(db) + '%';
        line(svg, 0, y, '100%', y, '#0a250c');
    }));
    let d = 'M0 0H727';
    for (let x = 0; x < 727; x++) {
        const a = Math.max(1, amp(x) * svg.dataset.gain * (0.4 + rand() * 0.6));
        d += `M${x + 0.5} ${-a}V${a}`;
    }
    const box = add(svg, 'svg', { y: '50%', width: '100%', height: 40, viewBox: '0 0 727 40', preserveAspectRatio: 'none', overflow: 'visible' });
    add(box, 'path', { d, stroke: '#00dd8f', fill: 'none' });
});

// dB rulers
document.querySelectorAll('.scale svg').forEach(svg => {
    add(svg, 'text', { x: 7, y: 13 }, 'dB');
    for (let db = -1; db >= -21; db--) {
        [-1, 1].forEach(s => {
            const y = 50 + s * level(db) + '%';
            const major = marks.includes(db);
            line(svg, 0, y, major ? 4 : 2, y, '#999');
            if (major) add(svg, 'text', { x: 7, y, dy: 4 }, db);
        });
    }
    line(svg, 0, '50%', 4, '50%', '#999');
    add(svg, 'text', { x: 7, y: '50%', dy: 4 }, '-∞');
});

// Time ruler
const timeline = document.getElementById('timeline');
add(timeline, 'text', { x: 3, y: 14 }, 'hms');
for (let i = 19; i <= 40; i++) {
    const x = timeX(i / 10);
    line(timeline, x, i % 2 ? 22 : 19, x, 27, '#aaa');
    if (i % 2 === 0) add(timeline, 'text', { x, y: 14, 'text-anchor': 'middle' }, (i / 10).toFixed(1));
}

// Overview
const overview = document.getElementById('overview');
const bursts = [[0, 28], [74, 102], [235, 275], [318, 355], [405, 432], [480, 505], [545, 562], [618, 630], [668, 685]];
[8, 24].forEach(y => {
    let d = '';
    bursts.forEach(([from, to]) => {
        for (let x = from; x < to; x += 2) d += `M${x} ${-rand() * 2}V${rand() * 2}`;
    });
    const box = add(overview, 'svg', { y, width: '100%', height: 10, viewBox: '0 0 727 10', preserveAspectRatio: 'none', overflow: 'visible' });
    line(box, 0, 0, 727, 0, '#12905f');
    add(box, 'path', { d, stroke: '#14d693', fill: 'none' });
});
const win = document.getElementById('window');
win.style.left = VIEW.start / VIEW.total * 100 + 0.4 + '%';
win.style.width = (VIEW.end - VIEW.start) / VIEW.total * 100 + 1.2 + '%';

// Level meter scale
const levels = document.getElementById('levels');
for (let db = -60; db <= 0; db++) {
    const x = (db + 60) / 60 * 100 + '%';
    line(levels, x, 0, x, db % 3 ? 2 : 5, '#999');
    if (db === -60) add(levels, 'text', { x: -1, y: 17 }, 'dB');
    else if (db % 3 === 0) add(levels, 'text', { x, y: 17, 'text-anchor': 'middle' }, db);
}
```
